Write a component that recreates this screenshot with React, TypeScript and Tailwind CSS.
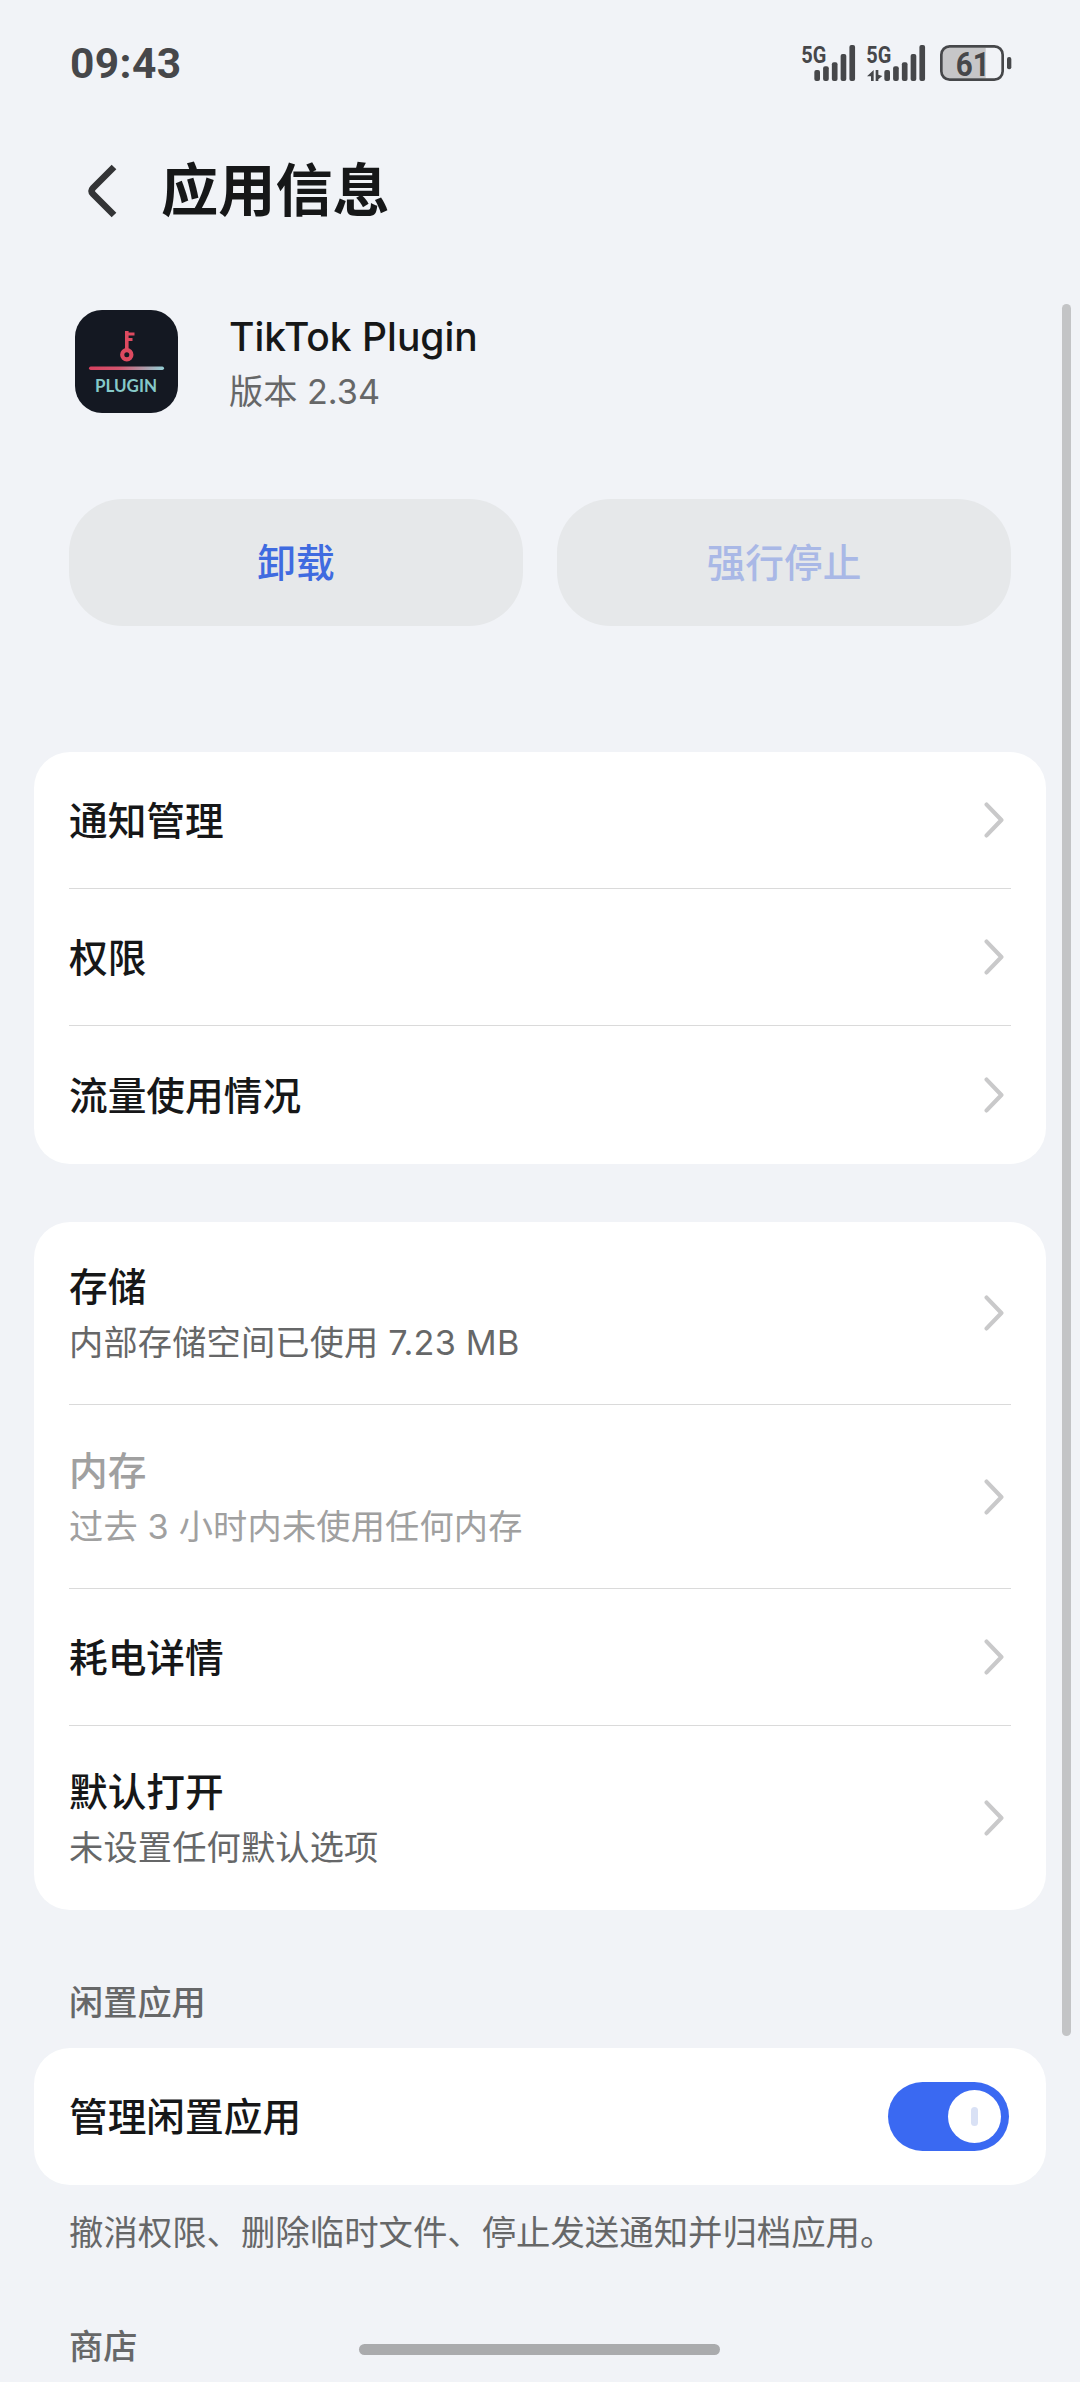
// src/App.tsx
import React from 'react';
import clsx from 'clsx';

interface Row {
  title: string;
  desc?: string;
  disabled?: boolean;
  height: string;
}

const generalRows: Row[] = [
  { title: '通知管理', height: 'h-[137px]' },
  { title: '权限', height: 'h-[137px]' },
  { title: '流量使用情况', height: 'h-[138px]' },
];

const usageRows: Row[] = [
  { title: '存储', desc: '内部存储空间已使用 7.23 MB', height: 'h-[183px]' },
  { title: '内存', desc: '过去 3 小时内未使用任何内存', disabled: true, height: 'h-[184px]' },
  { title: '耗电详情', height: 'h-[137px]' },
  { title: '默认打开', desc: '未设置任何默认选项', height: 'h-[184px]' },
];

const barTops = [147, 136, 124, 99, 72];

const SignalBars: React.FC<{ x: number; labelX: number }> = ({ x, labelX }) => (
  <g>
    <text
      x={labelX}
      y="125"
      fontSize="70"
      fontWeight="700"
      textLength="75"
      lengthAdjust="spacingAndGlyphs"
      className="font-['Roboto',sans-serif]"
    >
      5G
    </text>
    {barTops.map((top, i) => (
      <rect key={top} x={x + i * 26.3} y={top} width="17" height={180 - top} rx="6" />
    ))}
  </g>
);

const StatusIcons: React.FC = () => (
  <svg viewBox="60 60 642 132" className="w-[214px] h-[44px]" fill="#46474a">
    <SignalBars x={103} labelX={64} />
    <SignalBars x={313} labelX={259} />
    {/* Flechas de datos */}
    <path d="M281 147v33h-8v-14h-12z" />
    <path d="M287 147h8v14l12 4-12 10v5h-8z" />
    {/* Batería */}
    <path d="M500 80h117v92H500q-14 0-14-16V96q0-16 14-16z" fill="#c6c6c8" />
    <rect x="484" y="76" width="184" height="100" rx="25" fill="none" stroke="#46474a" strokeWidth="8" />
    <rect x="681" y="108" width="13" height="37" rx="6" />
    <text
      x="527"
      y="164"
      fontSize="100"
      fontWeight="700"
      textLength="102"
      lengthAdjust="spacingAndGlyphs"
      className="font-['Roboto',sans-serif]"
    >
      61
    </text>
  </svg>
);

const AppIcon: React.FC = () => (
  <svg viewBox="0 0 103 103" className="w-[103px] h-[103px] -mt-[1px]">
    <defs>
      <linearGradient id="line" x1="0" x2="1" y1="0" y2="0">
        <stop offset="0" stopColor="#d8405f" />
        <stop offset="0.4" stopColor="#d3566f" />
        <stop offset="1" stopColor="#93cfd6" />
      </linearGradient>
    </defs>
    <rect width="103" height="103" rx="27" fill="#141822" />
    {/* Llave */}
    <g stroke="#de4a60" fill="none">
      <circle cx="51.8" cy="44.7" r="4.6" strokeWidth="4.2" />
      <path d="M51.8 41V21" strokeWidth="3.6" />
      <path d="M52 24h7.5M52 29.5h5.5" strokeWidth="3" />
    </g>
    <rect x="14" y="56.5" width="75" height="3.4" rx="1.7" fill="url(#line)" />
    <text
      x="20"
      y="82"
      fontSize="16.5"
      fontWeight="700"
      fill="#86c9c9"
      textLength="62"
      lengthAdjust="spacingAndGlyphs"
      className="font-['Lato',sans-serif]"
    >
      PLUGIN
    </text>
  </svg>
);

const Chevron: React.FC = () => (
  <svg
    viewBox="0 0 20 36"
    className="w-[20px] h-[36px] mr-[7px] shrink-0"
    fill="none"
    stroke="#c9c9ca"
    strokeWidth="4.2"
    strokeLinecap="round"
    strokeLinejoin="round"
  >
    <path d="M2.6 2.6 17.4 18 2.6 33.4" />
  </svg>
);

const Card: React.FC<{ rows: Row[] }> = ({ rows }) => (
  <div className="mx-[34px] px-[35px] rounded-[36px] bg-white">
    {rows.map(({ title, desc, disabled, height }, i) => (
      <div
        key={title}
        className={clsx(
          'flex items-center justify-between',
          height,
          i < rows.length - 1 && 'border-b border-[#dadada]',
        )}
      >
        <div className={clsx(desc ? 'pt-[4px]' : 'pt-[2px]', disabled ? 'text-[#a0a0a0]' : 'text-[#161718]')}>
          <div className="text-[38.7px] leading-[56px] font-medium">{title}</div>
          {desc && (
            <div className={clsx('text-[34.2px] leading-[56px] tracking-[0.2px]', !disabled && 'text-[#666768]')}>
              {desc}
            </div>
          )}
        </div>
        <Chevron />
      </div>
    ))}
  </div>
);

export default function App() {
  return (
    <div className="relative w-[1080px] h-[2382px] overflow-hidden bg-[#f1f3f7] font-['Inter','Noto_Sans_CJK_SC',sans-serif]">
      {/* Barra de estado */}
      <header className="flex items-center justify-between h-[126px] pl-[70px] pr-[66px]">
        <span className="pt-[2px] text-[42.5px] leading-none font-bold tracking-[0.4px] text-[#46474a] font-['Roboto',sans-serif]">
          09:43
        </span>
        <StatusIcons />
      </header>

      {/* Título */}
      <div className="flex items-center h-[130px] pl-[86px]">
        <svg
          viewBox="0 0 32 56"
          className="w-[32px] h-[56px]"
          fill="none"
          stroke="#333436"
          strokeWidth="6.6"
          strokeLinejoin="round"
        >
          <path d="M28 4 7 25q-3 3 0 6l21 21" />
        </svg>
        <h1 className="ml-[43px] text-[57.2px] leading-[80px] font-bold text-[#161718]">应用信息</h1>
      </div>

      {/* Aplicación */}
      <div className="flex items-center h-[104px] mt-[54px] pl-[75px] gap-[51px]">
        <AppIcon />
        <div className="pt-[3px]">
          <div className="text-[39px] leading-[56px] font-medium text-[#161718]">TikTok Plugin</div>
          <div className="text-[34.2px] leading-[54px] text-[#666768]">版本 2.34</div>
        </div>
      </div>

      {/* Acciones */}
      <div className="grid grid-cols-2 gap-[34px] mt-[85px] mx-[69px] text-[38.7px] font-medium">
        <button className="h-[127px] pt-[2px] rounded-[54px] bg-[#e6e8ea] text-[#3f6be0]">卸载</button>
        <button className="h-[127px] pt-[2px] rounded-[54px] bg-[#e6e8ea] text-[#a9b8e6]">强行停止</button>
      </div>

      <main className="mt-[126px]">
        <Card rows={generalRows} />
        <div className="h-[58px]" />
        <Card rows={usageRows} />

        <h2 className="mt-[66px] px-[69px] text-[34.2px] leading-[54px] font-medium text-[#666768]">闲置应用</h2>
        <div className="flex items-center justify-between h-[137px] mt-[18px] mx-[34px] pl-[35px] pr-[37px] rounded-[36px] bg-white">
          <span className="text-[38.7px] leading-[56px] font-medium text-[#161718]">管理闲置应用</span>
          <span className="flex items-center justify-end w-[121px] h-[69px] pr-[8px] rounded-full bg-[#3a69f2]">
            <span className="flex items-center justify-center w-[53px] h-[53px] rounded-full bg-white">
              <span className="w-[7px] h-[19px] rounded-full bg-[#d9e1f5]" />
            </span>
          </span>
        </div>
        <p className="mt-[21px] px-[69px] text-[34.4px] leading-[54px] text-[#666768]">
          撤消权限、删除临时文件、停止发送通知并归档应用。
        </p>
        <h2 className="mt-[60px] px-[69px] text-[34.2px] leading-[54px] font-medium text-[#666768]">商店</h2>
      </main>

      {/* Scroll e indicador de inicio */}
      <div className="absolute top-[304px] right-[9px] w-[9px] h-[1732px] rounded-full bg-[#c3c4c6]" />
      <div className="absolute bottom-[27px] left-[359px] w-[361px] h-[11px] rounded-full bg-[#aaabad]" />
    </div>
  );
}
